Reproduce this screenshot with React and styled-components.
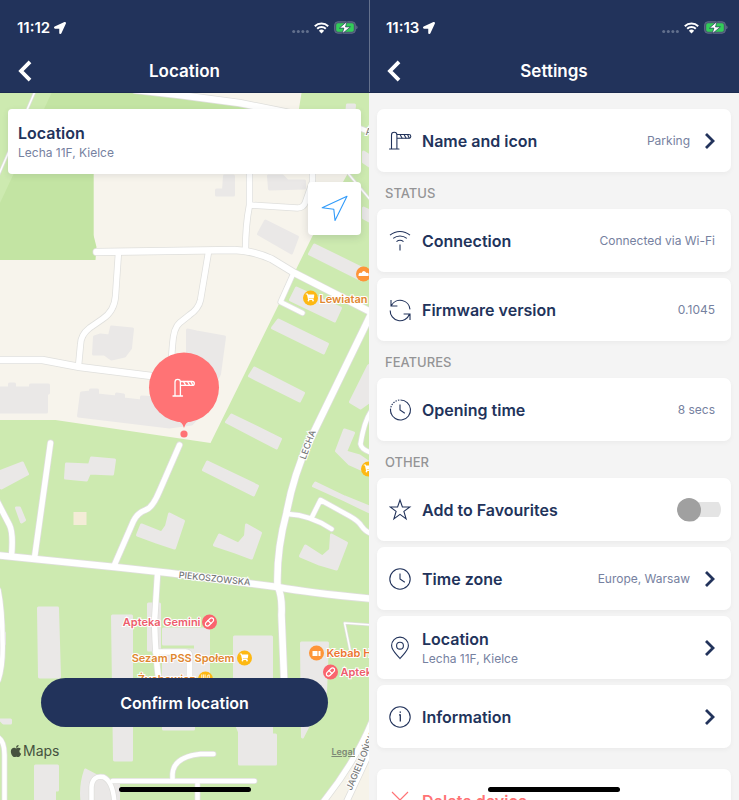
import React from "react";
import styled, { createGlobalStyle } from "styled-components";
import { FaApple, FaLocationArrow, FaShoppingCart } from "react-icons/fa";
import { Pill, Utensils } from "lucide-react";

const navy = "#22335b";

const GlobalStyle = createGlobalStyle`
  * { box-sizing: border-box; }
  body {
    margin: 0;
    background: #f4f4f4;
    color: ${navy};
    font-family: Inter, "Liberation Sans", sans-serif;
  }
  button, input { font: inherit; color: inherit; margin: 0; }
`;

const Screens = styled.div`
  display: grid;
  grid-template-columns: minmax(0, 369fr) minmax(0, 370fr);
  height: 100vh;
`;

const Phone = styled.section`
  position: relative;
  display: flex;
  flex-direction: column;
  min-height: 0;
  overflow: hidden;
`;

const Header = styled.header`
  flex: none;
  background: ${navy};
  color: #fff;
  border-bottom: 1px solid #1b2b50;
  box-shadow: ${(p) => (p.$divided ? "inset 1px 0 #64718d" : "none")};
`;

const StatusBar = styled.div`
  display: flex;
  align-items: center;
  justify-content: space-between;
  height: 49px;
  padding: 6px 11px 0 17px;
`;

const Clock = styled.div`
  display: flex;
  align-items: center;
  gap: 4px;
  font-size: 15px;
  font-weight: 600;
  line-height: 20px;
`;

const Indicators = styled.div`
  display: flex;
  align-items: center;
  gap: 5px;
`;

const NavBar = styled.div`
  display: grid;
  grid-template-columns: 50px 1fr 50px;
  align-items: center;
  height: 43px;
`;

const BackButton = styled.button`
  display: flex;
  align-items: center;
  height: 43px;
  padding: 0 0 0 18px;
  border: 0;
  background: none;
`;

const Title = styled.h1`
  margin: 0;
  padding-top: 1px;
  text-align: center;
  font-size: 17px;
  font-weight: 600;
  line-height: 24px;
`;

const MapArea = styled.main`
  position: relative;
  flex: 1;
  display: flex;
  flex-direction: column;
  padding: 16px 8px 0;
  min-height: 0;
`;

const MapCanvas = styled.svg`
  position: absolute;
  inset: 0;
  width: 100%;
  height: 100%;
`;

const AddressCard = styled.div`
  position: relative;
  height: 65px;
  padding: 13px 10px;
  border-radius: 4px;
  background: #fff;
  box-shadow: 0 2px 6px rgba(40, 50, 60, 0.1);
`;

const LocateButton = styled.button`
  position: relative;
  display: grid;
  place-items: center;
  align-self: flex-end;
  width: 53px;
  height: 53px;
  margin-top: 8px;
  padding: 0;
  border: 0;
  border-radius: 4px;
  background: #fff;
  box-shadow: 0 2px 8px rgba(40, 50, 60, 0.16);
`;

const ConfirmButton = styled.button`
  position: relative;
  height: 49px;
  margin: auto 33px 0;
  border: 0;
  border-radius: 25px;
  background: ${navy};
  color: #fff;
  font-size: 16px;
  font-weight: 600;
`;

const Attribution = styled.footer`
  position: relative;
  display: flex;
  align-items: center;
  justify-content: space-between;
  height: 73px;
  padding: 0 6px 25px 1px;
  color: #46523f;
`;

const MapsBrand = styled.span`
  display: flex;
  align-items: center;
  font-size: 14px;
  line-height: 20px;
`;

const LegalLink = styled.a`
  color: #7d8876;
  font-size: 9px;
  font-weight: 600;
`;

const HomeIndicator = styled.div`
  position: absolute;
  left: 50%;
  bottom: 8px;
  width: 132px;
  height: 5px;
  margin-left: -66px;
  border-radius: 3px;
  background: #000;
`;

const SettingsList = styled.main`
  flex: 1;
  min-height: 0;
  padding: 16px 8px;
  overflow-y: auto;
  scrollbar-width: none;
  background: #f4f4f4;
`;

const Group = styled.section`
  display: flex;
  flex-direction: column;
  gap: 6px;
  margin-top: ${(p) => (p.$spaced ? "21px" : "0")};
`;

const GroupLabel = styled.h2`
  height: 31px;
  margin: 0 0 -6px;
  padding: 5px 8px 0;
  color: #949496;
  font-size: 13px;
  font-weight: 500;
  line-height: 20px;
`;

const LabelledGroup = styled(Group)`
  padding-top: 6px;
`;

const Row = styled.div`
  display: flex;
  align-items: center;
  gap: 10px;
  width: 100%;
  height: 63px;
  padding: 0 ${(p) => (p.$toggle ? "10px" : "16px")} 0 12px;
  border: 0;
  border-radius: 7px;
  background: #fff;
  color: ${(p) => (p.$danger ? "#ff7375" : navy)};
  box-shadow: 0 2px 5px rgba(0, 0, 0, 0.04);
  text-align: left;
  flex: none;
`;

const RowIcon = styled.svg`
  flex: none;
  width: 23px;
  height: 24px;
  fill: none;
  stroke: currentColor;
  stroke-width: 1.1;
`;

const RowText = styled.span`
  flex: 1;
  display: flex;
  flex-direction: column;
  min-width: 0;
`;

const Name = styled.span`
  font-size: 16px;
  font-weight: 600;
  line-height: 22px;
  white-space: nowrap;
`;

const Detail = styled.span`
  color: #7681a0;
  font-size: 12px;
  font-weight: 400;
  line-height: 18px;
  white-space: nowrap;
`;

const Chevron = styled.svg`
  flex: none;
  width: 11px;
  height: 16px;
  margin-left: 4px;
  fill: none;
  stroke: ${navy};
  stroke-width: 2.8;
`;

const Switch = styled.input`
  appearance: none;
  display: flex;
  align-items: center;
  flex: none;
  width: 44px;
  height: 24px;
  background: linear-gradient(#e4e4e4, #e4e4e4) center / 100% 15px no-repeat;
  clip-path: inset(0 round 12px);

  &::before {
    content: "";
    width: 24px;
    height: 24px;
    border-radius: 50%;
    background: #a0a0a0;
  }
  &:checked { justify-content: flex-end; }
  &:checked::before { background: ${navy}; }
`;

const StreetName = styled.text`
  font-size: 9px;
  font-weight: 500;
  fill: #77797a;
  stroke: #fff;
  stroke-width: 2px;
  paint-order: stroke;
`;

const PoiName = styled.text`
  font-size: 11px;
  font-weight: 600;
  fill: ${(p) => p.$color};
  stroke: #fff;
  stroke-width: 2px;
  paint-order: stroke;
`;

function PhoneHeader({ time, title, divided }) {
  return (
    <Header $divided={divided}>
      <StatusBar>
        <Clock>
          {time}
          <FaLocationArrow size={12} />
        </Clock>
        <Indicators>
          <svg width="17" height="12" fill="#62708d" aria-hidden="true">
            <circle cx="1.7" cy="9.5" r="1.5" /><circle cx="6.3" cy="9.5" r="1.5" />
            <circle cx="10.9" cy="9.5" r="1.5" /><circle cx="15.4" cy="9.5" r="1.5" />
          </svg>
          <svg width="15" height="12" viewBox="0 0 15 12" fill="none" stroke="#fff" aria-label="Wi-Fi">
            <path d="M.8 4.2a9.6 9.6 0 0 1 13.4 0M3.2 6.8a6.1 6.1 0 0 1 8.6 0" strokeWidth="2" />
            <path d="M7.5 11.4 4.9 8.8a3.8 3.8 0 0 1 5.2 0z" fill="#fff" stroke="none" />
          </svg>
          <svg width="24" height="13" viewBox="0 0 24 13" aria-label="Charging">
            <rect x=".6" y=".8" width="20.8" height="11.4" rx="3.3" fill="#46546f" stroke="#5f6d88" />
            <path d="M22.3 4.5c1.6.4 1.6 3.4 0 3.8z" fill="#69768f" />
            <rect x="2.2" y="2.3" width="17.6" height="8.4" rx="1.8" fill="#32cd59" />
            <path d="M13 .4 5.4 7.1h4.5L8.2 12.8 16.4 5.9h-4.9z" fill="#fff" stroke={navy} strokeWidth=".7" />
          </svg>
        </Indicators>
      </StatusBar>
      <NavBar>
        <BackButton aria-label="Back">
          <svg width="14" height="22" viewBox="0 0 14 22" fill="none" stroke="#fff" strokeWidth="3.8">
            <path d="M12 1.8 3 11l9 9.2" />
          </svg>
        </BackButton>
        <Title>{title}</Title>
      </NavBar>
    </Header>
  );
}

const roads = [
  ["M136 90 L180 95 L240 103 L290 113", 7],
  ["M250 165V205Q246 225 246 250M250 205L298 208Q304 208 306 202L313 182V165", 6],
  ["M97 252L235 250Q255 251 272 259L295 273L340 296L375 314", 7],
  ["M119 252L116 296Q115 311 103 319L90 328Q81 335 81 345L79 366", 6],
  ["M209 252L201 300Q199 309 190 315L180 323Q174 328 173 345L172 358", 6],
  ["M-5 360H43L80 367L160 377", 7],
  ["M294 273L281 302L303 313", 5],
  ["M373 311L309 443Q294 475 287 513Q277 550 278 586Q283 596 282 615L285 690", 7],
  ["M-5 555L35 559L115 567L170 573L278 587Q310 593 375 599", 7],
  ["M51 443L35 558", 6],
  ["M180 445L160 491Q153 508 146 510Q138 513 134 521L114 567", 6],
  ["M-4 498L10 525Q14 533 12 556", 6],
  ["M158 574L155 622Q156 660 160 685M156 652H186Q190 652 190 656V685", 6],
  ["M288 514Q311 515 332 529M312 518L321 500L350 516Q359 521 362 526Q366 532 373 534", 5],
  ["M372 411Q365 420 361 444Q362 450 373 453", 5],
  ["M214 754H201Q174 757 173 774V781M113 781H255M198 781V805", 5],
  ["M-4 736Q5 739 5 755V804M92 804V787Q93 775 104 777Q114 782 115 804", 5],
  ["M373 720Q356 762 322 804M346 804L375 742", 6],
  ["M373 625L345 623L351 652", 2],
  ["M37 88L-3 180M349 174L376 206", 2],
  ["M360 128L375 134", 5],
  ["M-1 590Q3 610 3 640Q4 665 -1 680", 5],
];

const buildings = [
  "M225 176H234V195H217V190H224Z",
  "M269 176H283L288 181H305V188L270 189Z",
  "M266 221L298 237L292 253L259 234Z",
  "M315 245L368 271L362 280L310 254Z",
  "M297 288L341 308L335 321L291 300Z",
  "M279 320L328 344L324 353L273 328Z",
  "M255 368L304 393L300 401L250 376Z",
  "M232 415L281 439L277 448L227 422Z",
  "M208 462L258 486L254 495L204 470Z",
  "M112 327L133 329L132 338L131 348L125 356L112 359L105 354L94 354L95 337L101 335L110 336Z",
  "M188 330L197 332L225 337L220 374L214 385L188 384Z",
  "M0 388H10V384H15V388H31V385H49V393L47 394V412H0Z",
  "M82 393L91 392V390H98V395L117 397V394L124 395V399L142 401V397L160 398L205 410L192 424L170 427L79 416Z",
  "M-3 473L23 463L28 474L2 488L-5 485Z",
  "M67 464L90 465L92 458L115 460L113 474L90 473L87 480L66 478Z",
  "M17 508L20 508L25 520L22 522Z",
  "M142 525L162 533L167 526L170 514L184 521L175 548L157 542L138 535Z",
  "M220 535L239 544L246 536L247 525L261 533L252 558L236 552L215 545Z",
  "M306 546L323 557L331 550L332 535L347 543L337 569L320 564L301 556Z",
  "M316 483L345 497L370 507V512L345 500L314 486Z",
  "M345 430L354 433L346 452L360 456L370 463V473L350 464L337 451Z",
  "M369 366L375 362V398L361 408L351 402Z",
  "M348 105L355 105L354 117L347 115Z M364 152L376 160V170L364 162Z M364 208L376 214V224L364 218Z",
  "M39 608H58L60 677H40Z",
  "M113 616H132V760H115Z M149 604H160V650H149Z",
  "M164 629H209V676H196V644H164Z M164 650V729H194V650Z",
  "M235 637H272V735H276V764H240V732L235 720Z",
  "M302 643H328L326 692L303 737Z",
  "M1 720H11V723H4Z",
  "M36 766H58V790H55V804H36Z M86 770L105 780L119 783V804H83Q80 788 86 770Z",
  "M0 628L5 633V644H0Z",
];

function Barrier() {
  return (
    <g fill="none" strokeLinejoin="round" strokeLinecap="round">
      <path d="M3 18V4.5a2.7 2.7 0 0 1 5.4 0V18M1 18.5h9.5M8.4 4h12a1.9 1.9 0 0 1 0 3.8h-12" />
      <path d="m11.5 4 2 3.6M15.5 4l2 3.6M19 4l1.7 3.6" />
    </g>
  );
}

function Poi({ x, y, color, children }) {
  return (
    <g>
      <circle cx={x} cy={y} r="7.5" fill={color} />
      <svg x={x - 5} y={y - 5} width="10" height="10" overflow="visible" color="#fff">{children}</svg>
    </g>
  );
}

function MapDrawing() {
  return (
    <MapCanvas viewBox="0 93 370 707" preserveAspectRatio="xMidYMin slice" role="img" aria-label="Map around Lecha 11F, Kielce">
      <rect y="90" width="370" height="715" fill="#cdeab0" />
      <path d="M94 100L141 93H302L296 130L348 174L313 236L211 443L56 420H0V255H94Z" fill="#f7f4ec" />
      <path d="M52 93H141L270 110L94 165V235L97 247L96 260H0V204Z" fill="#c3e4a3" />
      <path d="M370 738L327 803H372Z" fill="#f6f3e9" />
      <g fill="#eae8e7" stroke="#eae8e7" strokeWidth="3" strokeLinejoin="round">
        {buildings.map((d) => <path key={d} d={d} />)}
      </g>
      <path d="M74 512h13v13H74z" fill="#f4ecd7" />
      <g fill="none" strokeLinecap="round" strokeLinejoin="round" stroke="#dfdfdc">
        {roads.map(([d, w]) => <path key={d} d={d} strokeWidth={w + 1} />)}
      </g>
      <g fill="none" strokeLinecap="round" strokeLinejoin="round" stroke="#fff">
        {roads.map(([d, w]) => <path key={d} d={d} strokeWidth={w - 0.5} />)}
      </g>

      <StreetName transform="translate(306 460) rotate(-70)">LECHA</StreetName>
      <StreetName transform="translate(179 578) rotate(6)">PIEKOSZOWSKA</StreetName>
      <StreetName transform="translate(352 791) rotate(-67)">JAGIELLOŃSKA</StreetName>
      <StreetName x="366" y="135">A</StreetName>

      <PoiName $color="#df8730" x="320" y="303">Lewiatan</PoiName>
      <PoiName $color="#ed5d6c" x="201" y="626" textAnchor="end">Apteka Gemini</PoiName>
      <PoiName $color="#df8730" x="235" y="662" textAnchor="end">Sezam PSS Społem</PoiName>
      <PoiName $color="#df8730" x="196" y="683" textAnchor="end">Żychowicz</PoiName>
      <PoiName $color="#ec7630" x="327" y="657">Kebab House</PoiName>
      <PoiName $color="#ed5d6c" x="341" y="676">Apteka</PoiName>
      <Poi x={311} y={298} color="#fdb813"><FaShoppingCart size={9} /></Poi>
      <Poi x={245} y={658} color="#fdb813"><FaShoppingCart size={9} /></Poi>
      <Poi x={206} y={679} color="#fdb813"><Utensils size={10} /></Poi>
      <Poi x={369} y={469} color="#fdb813"><FaShoppingCart size={9} /></Poi>
      <Poi x={210} y={622} color="#fa646e"><Pill size={10} strokeWidth={3} /></Poi>
      <Poi x={331} y={672} color="#fa646e"><Pill size={10} strokeWidth={3} /></Poi>
      <Poi x={364} y={274} color="#fe9538">
        <path d="M0 7Q0 3 3 4Q5 0 8 4Q11 3 10 7Z" fill="#fff" />
      </Poi>
      <Poi x={317} y={653} color="#fe9538">
        <path d="M1 3h5v5H1zM7 3h2v5H7z" fill="#fff" />
      </Poi>

      <circle cx="184.5" cy="387.5" r="35" fill="#ff7375" />
      <path d="M178 421Q183 422 184.5 428Q186 422 191 421Z" fill="#ff7375" />
      <circle cx="184.5" cy="434" r="3.6" fill="#ff7375" />
      <g transform="translate(172.5 377.5)" stroke="#fff" strokeWidth="1.3"><Barrier /></g>
    </MapCanvas>
  );
}

const icons = {
  barrier: <g transform="translate(-.5 1.5)"><Barrier /></g>,
  wifi: <path d="M1 6.2a15.4 15.4 0 0 1 20 0M4.2 9.4a10.8 10.8 0 0 1 13.6 0M7.5 12.6a5.8 5.8 0 0 1 7 0M11 15.5v6" />,
  sync: <path d="M2 2v6h6.4M2.4 7.6A9.9 9.9 0 0 1 21 11.4M21 22v-6h-6.4M20.4 16.2A9.9 9.9 0 0 1 1.2 12.4" />,
  timer: <><path d="M11.5 2a10 10 0 1 1-9.6 12.8" /><path d="M1.5 12a10 10 0 0 1 10-10" strokeDasharray="1.4 1.2" /><path d="M1.5 11.5q0 2 .6 3.8M11 6.5V12l4.8 3.2" /></>,
  star: <path d="m11 2 2.4 7h7.4l-5.9 4.4 2.2 7.5-6.1-4.5-6.1 4.5 2.2-7.5L1.2 9h7.4z" />,
  clock: <><circle cx="11" cy="12" r="10.2" /><path d="M11 6.5V12l4.8 3.2" /></>,
  pin: <><path d="M11 22.5C7.5 18 2.6 14.6 2.6 9.5a8.4 8.4 0 0 1 16.8 0c0 5.1-4.9 8.5-8.4 13z" /><circle cx="11" cy="9.7" r="3.4" /></>,
  info: <><circle cx="11" cy="12" r="10.2" /><path d="M10 9.8h1.3v6.7M10.6 7.2h1.4" strokeWidth="1.3" /></>,
  cross: <path d="m3 3 16 16M19 3 3 19" />,
};

function Setting({ icon, name, subtitle, value, link, danger }) {
  return (
    <Row as={link ? "button" : "div"} $danger={danger}>
      <RowIcon viewBox="0 0 23 24" aria-hidden="true">{icons[icon]}</RowIcon>
      <RowText>
        <Name>{name}</Name>
        {subtitle && <Detail>{subtitle}</Detail>}
      </RowText>
      {value && <Detail>{value}</Detail>}
      {link && !danger && (
        <Chevron viewBox="0 0 11 16" aria-hidden="true"><path d="m2 1 7 7-7 7" /></Chevron>
      )}
    </Row>
  );
}

export default function App() {
  return (
    <>
      <GlobalStyle />
      <Screens>
        <Phone>
          <PhoneHeader time="11:12" title="Location" />
          <MapArea>
            <MapDrawing />
            <AddressCard>
              <RowText>
                <Name>Location</Name>
                <Detail>Lecha 11F, Kielce</Detail>
              </RowText>
            </AddressCard>
            <LocateButton aria-label="Use my location">
              <svg width="27" height="27" viewBox="0 0 27 27" fill="none" stroke="#319bfa" strokeWidth="1.1" strokeLinejoin="round">
                <path d="M1.2 12.8 26 1.2 14 25.4 12.8 14.2z" />
              </svg>
            </LocateButton>
            <ConfirmButton>Confirm location</ConfirmButton>
            <Attribution>
              <MapsBrand><FaApple size={14} />Maps</MapsBrand>
              <LegalLink href="#legal">Legal</LegalLink>
            </Attribution>
          </MapArea>
          <HomeIndicator />
        </Phone>

        <Phone>
          <PhoneHeader time="11:13" title="Settings" divided />
          <SettingsList>
            <Group>
              <Setting icon="barrier" name="Name and icon" value="Parking" link />
            </Group>
            <LabelledGroup>
              <GroupLabel>STATUS</GroupLabel>
              <Setting icon="wifi" name="Connection" value="Connected via Wi-Fi" />
              <Setting icon="sync" name="Firmware version" value="0.1045" />
            </LabelledGroup>
            <LabelledGroup>
              <GroupLabel>FEATURES</GroupLabel>
              <Setting icon="timer" name="Opening time" value="8 secs" />
            </LabelledGroup>
            <LabelledGroup>
              <GroupLabel>OTHER</GroupLabel>
              <Row as="label" $toggle>
                <RowIcon viewBox="0 0 23 24" aria-hidden="true">{icons.star}</RowIcon>
                <RowText><Name>Add to Favourites</Name></RowText>
                <Switch type="checkbox" role="switch" />
              </Row>
              <Setting icon="clock" name="Time zone" value="Europe, Warsaw" link />
              <Setting icon="pin" name="Location" subtitle="Lecha 11F, Kielce" link />
              <Setting icon="info" name="Information" link />
            </LabelledGroup>
            <Group $spaced>
              <Setting icon="cross" name="Delete device" link danger />
            </Group>
          </SettingsList>
          <HomeIndicator />
        </Phone>
      </Screens>
    </>
  );
}
